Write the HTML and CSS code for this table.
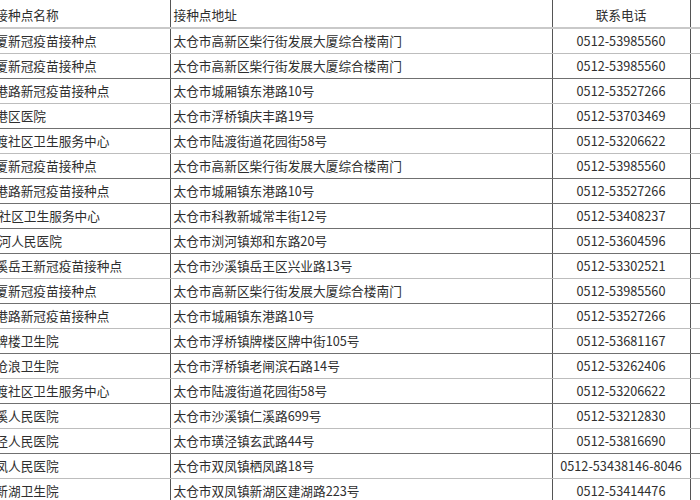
FILE: index.html
```html
<!DOCTYPE html>
<html lang="zh-CN">
<head>
<meta charset="utf-8">
<title>接种点</title>
<link rel="stylesheet" href="styles.css">
</head>
<body>
<table class="sites">
  <colgroup>
    <col class="c-name"><col class="c-addr"><col class="c-tel"><col class="c-extra">
  </colgroup>
  <thead>
    <tr class="head">
      <th class="name">接种点名称</th>
      <th class="addr">接种点地址</th>
      <th class="tel">联系电话</th>
      <th class="extra"></th>
    </tr>
  </thead>
  <tbody>
    <tr class="lt"><td class="name">厦新冠疫苗接种点</td><td class="addr">太仓市高新区柴行街发展大厦综合楼南门</td><td class="tel">0512-53985560</td><td class="extra"></td></tr>
    <tr class="dk"><td class="name">厦新冠疫苗接种点</td><td class="addr">太仓市高新区柴行街发展大厦综合楼南门</td><td class="tel">0512-53985560</td><td class="extra"></td></tr>
    <tr class="lt"><td class="name">港路新冠疫苗接种点</td><td class="addr">太仓市城厢镇东港路10号</td><td class="tel">0512-53527266</td><td class="extra"></td></tr>
    <tr class="dk"><td class="name">港区医院</td><td class="addr">太仓市浮桥镇庆丰路19号</td><td class="tel">0512-53703469</td><td class="extra"></td></tr>
    <tr class="lt"><td class="name">渡社区卫生服务中心</td><td class="addr">太仓市陆渡街道花园街58号</td><td class="tel">0512-53206622</td><td class="extra"></td></tr>
    <tr class="dk"><td class="name">厦新冠疫苗接种点</td><td class="addr">太仓市高新区柴行街发展大厦综合楼南门</td><td class="tel">0512-53985560</td><td class="extra"></td></tr>
    <tr class="dk"><td class="name">港路新冠疫苗接种点</td><td class="addr">太仓市城厢镇东港路10号</td><td class="tel">0512-53527266</td><td class="extra"></td></tr>
    <tr class="dk"><td class="name near">社区卫生服务中心</td><td class="addr">太仓市科教新城常丰街12号</td><td class="tel">0512-53408237</td><td class="extra"></td></tr>
    <tr class="dk"><td class="name near">河人民医院</td><td class="addr">太仓市浏河镇郑和东路20号</td><td class="tel">0512-53604596</td><td class="extra"></td></tr>
    <tr class="lt"><td class="name">溪岳王新冠疫苗接种点</td><td class="addr">太仓市沙溪镇岳王区兴业路13号</td><td class="tel">0512-53302521</td><td class="extra"></td></tr>
    <tr class="dk"><td class="name">厦新冠疫苗接种点</td><td class="addr">太仓市高新区柴行街发展大厦综合楼南门</td><td class="tel">0512-53985560</td><td class="extra"></td></tr>
    <tr class="lt"><td class="name">港路新冠疫苗接种点</td><td class="addr">太仓市城厢镇东港路10号</td><td class="tel">0512-53527266</td><td class="extra"></td></tr>
    <tr class="dk"><td class="name">牌楼卫生院</td><td class="addr">太仓市浮桥镇牌楼区牌中街105号</td><td class="tel">0512-53681167</td><td class="extra"></td></tr>
    <tr class="lt"><td class="name">沧浪卫生院</td><td class="addr">太仓市浮桥镇老闸滨石路14号</td><td class="tel">0512-53262406</td><td class="extra"></td></tr>
    <tr class="dk"><td class="name">渡社区卫生服务中心</td><td class="addr">太仓市陆渡街道花园街58号</td><td class="tel">0512-53206622</td><td class="extra"></td></tr>
    <tr class="lt"><td class="name">溪人民医院</td><td class="addr">太仓市沙溪镇仁溪路699号</td><td class="tel">0512-53212830</td><td class="extra"></td></tr>
    <tr class="dk"><td class="name">泾人民医院</td><td class="addr">太仓市璜泾镇玄武路44号</td><td class="tel">0512-53816690</td><td class="extra"></td></tr>
    <tr class="lt"><td class="name">凤人民医院</td><td class="addr">太仓市双凤镇栖凤路18号</td><td class="tel">0512-53438146-8046</td><td class="extra"></td></tr>
    <tr class="dk"><td class="name">新湖卫生院</td><td class="addr">太仓市双凤镇新湖区建湖路223号</td><td class="tel">0512-53414476</td><td class="extra"></td></tr>
  </tbody>
</table>
</body>
</html>
```

FILE: styles.css
```css
html, body {
  margin: 0;
  padding: 0;
  background: #ffffff;
  overflow: hidden;
}

body {
  font-family: "Noto Sans CJK SC", "Noto Sans", sans-serif;
  font-size: 12.7px;
  color: #2e2e2e;
}

.sites {
  table-layout: fixed;
  border-collapse: collapse;
  width: 720px;
}

.c-name { width: 170px; }
.c-addr { width: 382px; }
.c-tel { width: 138px; }
.c-extra { width: 30px; }

.sites th,
.sites td {
  height: 24px;
  padding: 0;
  white-space: nowrap;
  overflow: hidden;
  font-weight: normal;
  text-align: left;
  vertical-align: middle;
  line-height: 16px;
  border-bottom: 1px solid #8a8a8a;
}

.sites .head th {
  height: 25px;
  padding-top: 2px;
  border-bottom: 2px solid #c9c9c9;
}

.sites .lt td {
  border-bottom-color: #bdbdbd;
}

.sites .dk td {
  border-bottom-color: #707070;
}

.sites .name {
  text-indent: -4.7px;
}

.sites .name.near {
  text-indent: -1.5px;
}

.sites .addr {
  padding-left: 3px;
  border-left: 1px solid #555;
}

.sites .tel {
  text-align: center;
  border-left: 1px solid #555;
}

.sites .extra {
  border-left: 1px solid #555;
}
```
